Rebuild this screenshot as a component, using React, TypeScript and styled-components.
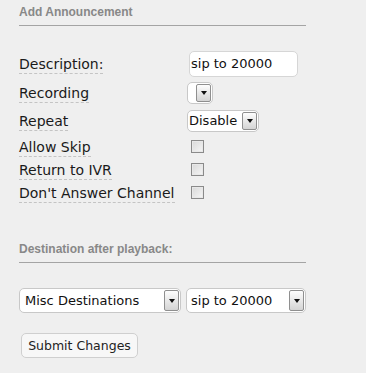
import React from 'react';
import styled, { createGlobalStyle } from 'styled-components';

const GlobalStyle = createGlobalStyle`
    html, body {
        margin: 0;
        padding: 0;
        background: #efefef;
    }
    body {
        font-family: "DejaVu Sans", Verdana, sans-serif;
        color: #1a1a1a;
    }
`;

const Page = styled.div`
    width: 287px;
    padding: 5px 0 0 19px;
`;

const SectionTitle = styled.div<{ $top?: number }>`
    margin-top: ${(p) => p.$top || 0}px;
    font-family: "Liberation Sans", Arial, sans-serif;
    font-weight: 700;
    font-size: 12px;
    line-height: 14px;
    color: #888;
    padding-bottom: 6px;
    border-bottom: 1px solid #a4a4a4;
`;

const Form = styled.div`
    margin-top: 23px;
    display: grid;
    grid-template-columns: 168px 1fr;
`;

const Row = styled.div<{ $h: number }>`
    display: contents;
    & > * {
        height: ${(p) => p.$h}px;
    }
`;

const Cell = styled.div`
    display: flex;
    align-items: center;
`;

const Label = styled.span`
    font-size: 14px;
    line-height: 16px;
    border-bottom: 1px dashed #c4c4c4;
    padding-bottom: 1px;
    margin-top: 3px;
`;

const TextInput = styled.input`
    box-sizing: border-box;
    width: 109px;
    height: 26px;
    margin-left: 2px;
    padding: 0 0 0 1px;
    border: 1px solid #d6d6d6;
    border-radius: 5px;
    background: #fff;
    font-family: "DejaVu Sans", Verdana, sans-serif;
    font-size: 13px;
    color: #111;
    outline: none;
`;

const SelectBox = styled.div<{ $w: number; $h: number }>`
    box-sizing: border-box;
    width: ${(p) => p.$w}px;
    height: ${(p) => p.$h}px;
    display: flex;
    align-items: center;
    justify-content: space-between;
    padding: 0 1px 0 1px;
    border: 1px solid #c8c8c8;
    border-radius: 5px;
    background: #fff;
    font-size: 13px;
    color: #111;
    white-space: nowrap;
    overflow: hidden;
`;

const SelectText = styled.span<{ $pad?: number }>`
    padding-left: ${(p) => p.$pad || 0}px;
`;

const Arrow = styled.span`
    box-sizing: border-box;
    flex: none;
    width: 15px;
    height: calc(100% - 2px);
    border: 1px solid #8f8f8f;
    border-radius: 2px;
    background: linear-gradient(#fdfdfd, #d4d4d4);
    display: flex;
    align-items: center;
    justify-content: center;
    &::after {
        content: '';
        border-left: 3px solid transparent;
        border-right: 3px solid transparent;
        border-top: 4px solid #111;
    }
`;

const Check = styled.input`
    appearance: none;
    box-sizing: border-box;
    width: 13px;
    height: 13px;
    margin: 0 0 0 4px;
    border: 1px solid #8a8a8a;
    background: linear-gradient(135deg, #d8d8d8, #f6f6f6);
    box-shadow: inset 0 0 0 1px #e8e8e8;
`;

const DestRow = styled.div`
    display: flex;
    gap: 5px;
    margin-top: 25px;
`;

const SubmitButton = styled.button`
    box-sizing: border-box;
    margin: 20px 0 0 2px;
    width: 117px;
    height: 25px;
    padding: 0;
    border: 1px solid #cfcfcf;
    border-radius: 5px;
    background: #f7f7f7;
    font-family: "DejaVu Sans", Verdana, sans-serif;
    font-size: 12.5px;
    color: #222;
`;

const Select: React.FC<{ w: number; h: number; value?: string; pad?: number }> = ({ w, h, value, pad }) => (
    <SelectBox $w={w} $h={h}>
        <SelectText $pad={pad}>{value}</SelectText>
        <Arrow />
    </SelectBox>
);

const App: React.FC = () => {
    return (
        <>
            <GlobalStyle />
            <Page>
                <SectionTitle>Add Announcement</SectionTitle>
                <Form>
                    <Row $h={29}>
                        <Cell><Label>Description:</Label></Cell>
                        <Cell><TextInput defaultValue="sip to 20000" /></Cell>
                    </Row>
                    <Row $h={29}>
                        <Cell><Label>Recording</Label></Cell>
                        <Cell><Select w={26} h={22} /></Cell>
                    </Row>
                    <Row $h={27}>
                        <Cell><Label>Repeat</Label></Cell>
                        <Cell><Select w={72} h={22} value="Disable" /></Cell>
                    </Row>
                    <Row $h={24}>
                        <Cell><Label>Allow Skip</Label></Cell>
                        <Cell><Check type="checkbox" /></Cell>
                    </Row>
                    <Row $h={23}>
                        <Cell><Label>Return to IVR</Label></Cell>
                        <Cell><Check type="checkbox" /></Cell>
                    </Row>
                    <Row $h={23}>
                        <Cell><Label>Don't Answer Channel</Label></Cell>
                        <Cell><Check type="checkbox" /></Cell>
                    </Row>
                </Form>
                <SectionTitle $top={38}>Destination after playback:</SectionTitle>
                <DestRow>
                    <Select w={162} h={25} value="Misc Destinations" pad={4} />
                    <Select w={120} h={25} value="sip to 20000" pad={3} />
                </DestRow>
                <SubmitButton>Submit Changes</SubmitButton>
            </Page>
        </>
    );
};

export default App;
